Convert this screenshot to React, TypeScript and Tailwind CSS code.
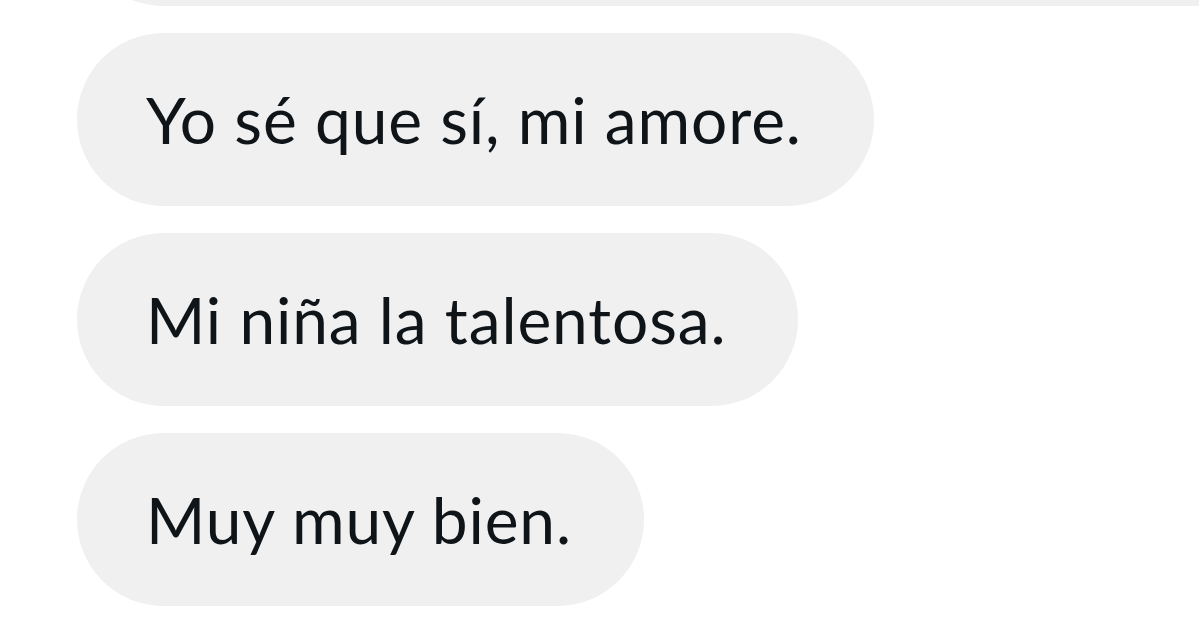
import React from 'react';

const messages = ['Yo sé que sí, mi amore.', 'Mi niña la talentosa.', 'Muy muy bien.'];

const Bubble: React.FC<{ text: string }> = ({ text }) => (
  <div className="flex h-[173px] items-center rounded-full bg-[#f0f0f0] pl-[69px] pr-[72px]">
    <span className="whitespace-nowrap text-[64px] leading-none tracking-[0.9px] text-[#0f1419]">{text}</span>
  </div>
);

export default function App() {
  return (
    <div
      className="h-[630px] w-[1199px] overflow-hidden bg-white"
      style={{ fontFamily: 'Lato, "Noto Sans", sans-serif' }}
    >
      <div className="flex flex-col items-start gap-[27px] pl-[77px]">
        {/* previous message, cut off at the top */}
        <div className="mt-[-167px] h-[173px] w-[1300px] rounded-full bg-[#f0f0f0]" />
        {messages.map(m => (
          <Bubble key={m} text={m} />
        ))}
      </div>
    </div>
  );
}
